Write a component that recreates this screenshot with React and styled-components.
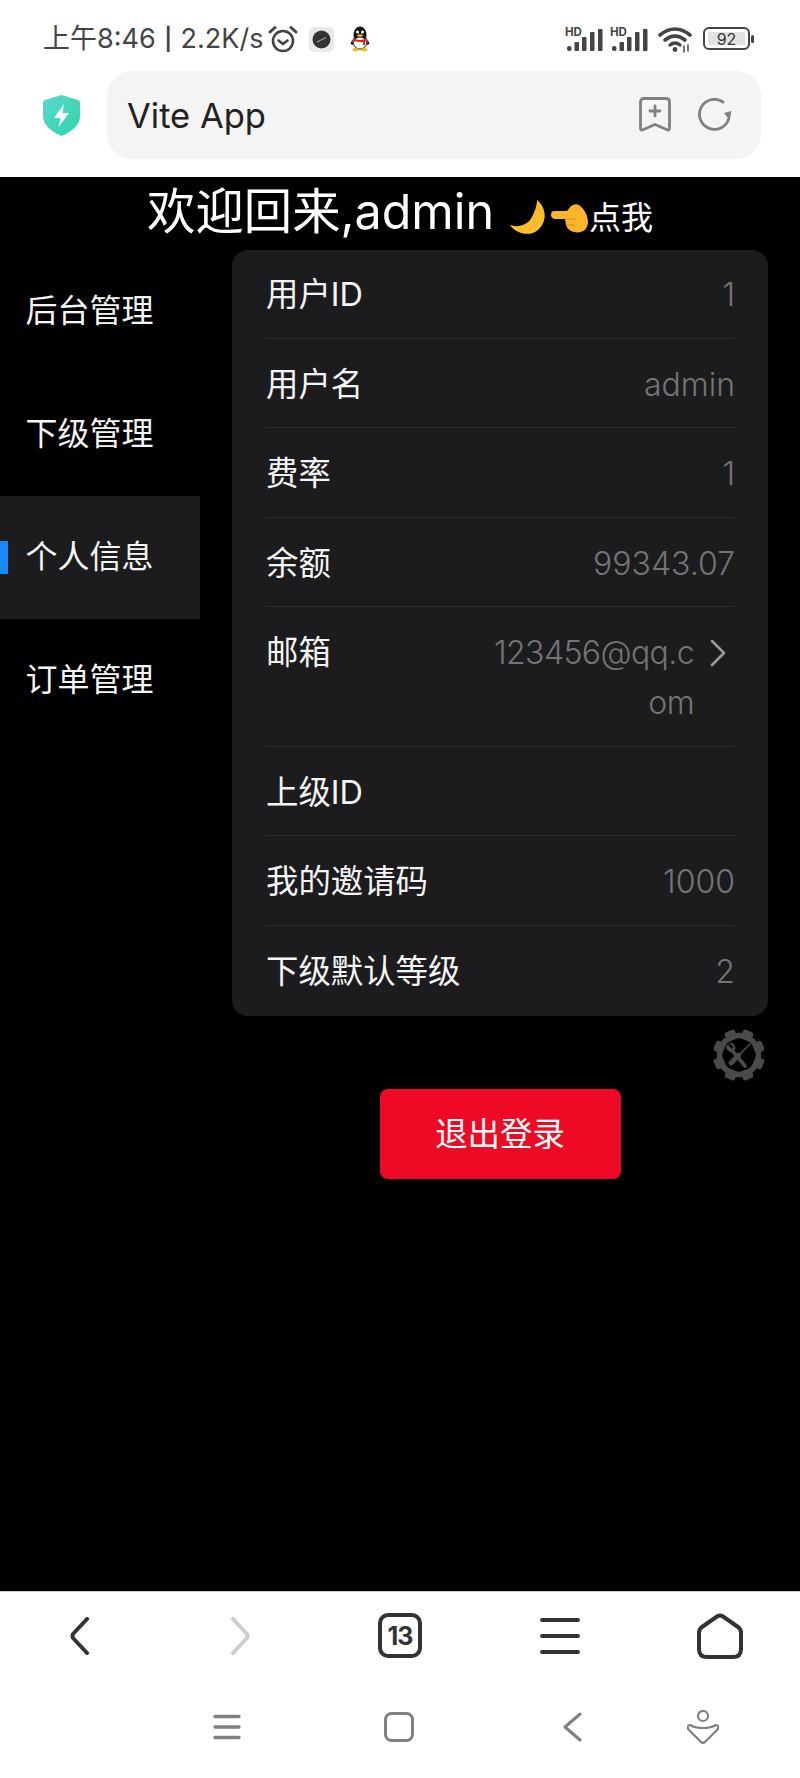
import React from 'react'
import styled, { createGlobalStyle } from 'styled-components'

const GlobalStyle = createGlobalStyle`
  html, body { margin: 0; padding: 0; background: #000; }
  body { font-family: Inter, "Noto Sans CJK SC", sans-serif; }
`

const Page = styled.div`
  width: 800px;
  height: 1778px;
  display: flex;
  flex-direction: column;
  overflow: hidden;
  background: #000;
`

const StatusBar = styled.div`
  height: 71px;
  box-sizing: border-box;
  padding: 21px 45px 0 43px;
  background: #fff;
  display: flex;
  align-items: flex-start;
  justify-content: space-between;
`

const StatusGroup = styled.div`
  display: flex;
  align-items: center;
  height: 36px;
`

const StatusText = styled.span`
  font-size: 27px;
  line-height: 36px;
  color: #444;
  white-space: nowrap;
`

const StatusDivider = styled.span`
  font-size: 22px;
  font-weight: 600;
  margin: 0 8.5px;
  position: relative;
  top: -1px;
`

const BrowserBar = styled.div`
  height: 106px;
  box-sizing: border-box;
  background: #fff;
  display: flex;
  align-items: flex-start;
  padding: 0 39px 0 43px;
`

const Shield = styled.svg`
  width: 37px;
  height: 41px;
  margin: 24px 27px 0 0;
  flex: none;
`

const AddressBox = styled.div`
  flex: 1;
  height: 88px;
  border-radius: 25px;
  background: #f4f4f4;
  display: flex;
  align-items: center;
  padding: 0 29px 0 20px;
`

const AddressText = styled.span`
  flex: 1;
  font-size: 34.5px;
  color: #222;
`

const Main = styled.div`
  flex: 1;
  display: flex;
  flex-direction: column;
  background: #000;
`

const Title = styled.div`
  height: 73px;
  box-sizing: border-box;
  padding-bottom: 12px;
  display: flex;
  align-items: center;
  justify-content: center;
  color: #fff;
  font-size: 48.4px;
  white-space: nowrap;
`

const TitleSmall = styled.span`
  font-size: 32px;
  margin-top: 14px;
`

const Body = styled.div`
  display: flex;
  gap: 32px;
  padding-right: 32px;
`

const Sidebar = styled.div`
  width: 200px;
  flex: none;
`

const SideItem = styled.div`
  position: relative;
  height: 123px;
  box-sizing: border-box;
  display: flex;
  align-items: center;
  padding: 0 0 7px 25.5px;
  font-size: 32px;
  color: #f5f5f5;
  background: ${p => (p.$active ? '#1c1c1e' : 'transparent')};

  ${p => p.$active && `
    &::before {
      content: '';
      position: absolute;
      left: 0;
      top: 45px;
      width: 8px;
      height: 33px;
      background: #1989fa;
    }
  `}
`

const Content = styled.div`
  flex: 1;
  min-width: 0;
  display: flex;
  flex-direction: column;
`

const Card = styled.div`
  background: #1c1c1e;
  border-radius: 16px;
  overflow: hidden;
  padding: 0 33px 0 34px;
`

const Row = styled.div`
  position: relative;
  display: flex;
  padding: 20px 0;
  line-height: 49.6px;
  font-size: 32.4px;

  ${p => !p.$last && `
    &::after {
      content: '';
      position: absolute;
      left: 0;
      right: 0;
      bottom: 1px;
      height: 1px;
      background: #2d2d2f;
    }
  `}
`

const RowLabel = styled.div`
  flex: 1;
  color: #f5f5f5;
  white-space: nowrap;
`

const RowValue = styled.div`
  flex: 1;
  color: #747476;
  font-size: 32px;
  text-align: right;
  word-break: break-all;
  font-weight: 300;
  letter-spacing: ${p => (p.$tight ? '-0.6px' : '0')};
`

const ArrowBox = styled.svg`
  width: 41px;
  height: 50px;
  flex: none;
`

const GearIcon = styled.svg`
  align-self: flex-end;
  width: 52px;
  height: 52px;
  margin: 13px 3px 0 0;
`

const LogoutButton = styled.button`
  align-self: center;
  width: 241px;
  height: 90px;
  margin-top: 8px;
  padding: 0 0 6px;
  border: none;
  border-radius: 8px;
  background: #ee0a24;
  color: #fff;
  font-family: inherit;
  font-size: 32.4px;
`

const BottomBar = styled.div`
  height: 187px;
  flex: none;
  box-sizing: border-box;
  background: #fff;
  border-top: 1px solid #ccc;
  display: flex;
  flex-direction: column;
`

const BrowserNav = styled.div`
  display: flex;
  height: 97px;
  padding-top: 21px;
  box-sizing: border-box;
`

const NavSlot = styled.div`
  flex: 1;
  display: flex;
  justify-content: center;
  align-items: flex-start;
`

const Chevron = styled.svg`
  margin-top: 4px;
`

const SystemNav = styled.div`
  display: flex;
  align-items: center;
  height: 60px;
  margin-top: 8px;
  padding-left: 213px;
`

const SystemIcon = styled.svg`
  flex: none;
  margin-left: ${p => p.$gap || 0}px;
`

const TabCount = styled.div`
  width: 44px;
  height: 45px;
  box-sizing: border-box;
  border: 4px solid #333;
  border-radius: 10px;
  display: flex;
  align-items: center;
  justify-content: center;
  color: #333;
  font-size: 25px;
  font-weight: 700;
  letter-spacing: -1px;
`

const Signal = ({ left }) => (
  <svg width="38" height="26" viewBox="0 0 38 26" style={{ marginLeft: left }}>
    <text x="0" y="9.5" fontSize="11.5" fontWeight="700" fill="#444" fontFamily="Inter, sans-serif">HD</text>
    <g fill="#444">
      <rect x="2" y="20" width="4.500" height="5" rx="2" />
      <rect x="9.500" y="16" width="4.500" height="9" rx="1" />
      <rect x="17" y="11" width="4.500" height="14" rx="1" />
      <rect x="25" y="6" width="4.500" height="19" rx="1" />
      <rect x="33" y="3" width="4.500" height="22" rx="1" />
    </g>
  </svg>
)

const PenguinIcon = () => (
  <svg width="20" height="26" viewBox="0 0 20 26" style={{ marginLeft: 16 }}>
    <ellipse cx="10" cy="9" rx="6.500" ry="8.500" fill="#111" />
    <ellipse cx="10" cy="17" rx="6.500" ry="6" fill="#fff" stroke="#222" strokeWidth="1" />
    <path d="M3 12 Q10 16 17 12 L17 15 L15 15 L15 19 L13 19 L13 16 Q10 16.500 3 15 Z" fill="#d8242a" />
    <ellipse cx="10" cy="9.500" rx="3" ry="1.300" fill="#f5b21a" />
    <circle cx="7.500" cy="6" r="1.500" fill="#fff" />
    <circle cx="12.500" cy="6" r="1.500" fill="#fff" />
    <path d="M2.500 13 L0.500 18 L3 19 Z M17.500 13 L19.500 18 L17 19 Z" fill="#111" />
    <ellipse cx="6" cy="23.500" rx="3.500" ry="1.500" fill="#f5b21a" />
    <ellipse cx="14" cy="23.500" rx="3.500" ry="1.500" fill="#f5b21a" />
  </svg>
)

const RowData = [
  { label: '用户ID', value: '1' },
  { label: '用户名', value: 'admin' },
  { label: '费率', value: '1' },
  { label: '余额', value: '99343.07' },
  { label: '邮箱', value: '123456@qq.com', arrow: true },
  { label: '上级ID', value: '' },
  { label: '我的邀请码', value: '1000' },
  { label: '下级默认等级', value: '2' },
]

const SideData = ['后台管理', '下级管理', '个人信息', '订单管理']

export default function App() {
  return (
    <Page>
      <GlobalStyle />
      <StatusBar>
        <StatusGroup>
          <StatusText>上午8:46<StatusDivider>|</StatusDivider>2.2K/s</StatusText>
          <svg width="30" height="28" viewBox="0 0 30 28" style={{ marginLeft: 5 }} fill="none" stroke="#444" strokeWidth="2.600" strokeLinecap="round" strokeLinejoin="round">
            <circle cx="15" cy="16" r="10" />
            <path d="M10.500 15.500 L15 19 L19.500 15.500" />
            <path d="M2 7 L7 2.500 M28 7 L23 2.500" strokeWidth="3" />
          </svg>
          <svg width="25" height="25" viewBox="0 0 25 25" style={{ marginLeft: 11 }}>
            <rect width="25" height="25" rx="5" fill="#e9e9e9" />
            <circle cx="12.500" cy="12.500" r="9" fill="#333" />
            <path d="M8 15 L17 10.500" stroke="#bbb" strokeWidth="1" />
          </svg>
          <PenguinIcon />
        </StatusGroup>
        <StatusGroup>
          <Signal left={0} />
          <Signal left={7} />
          <svg width="34" height="27" viewBox="0 0 34 27" style={{ marginLeft: 10 }} fill="none" stroke="#444" strokeLinecap="round">
            <path d="M2 9 Q17 -3 32 9" strokeWidth="3.600" />
            <path d="M7 14 Q17 6 27 14" strokeWidth="3.600" />
            <path d="M12 19 Q17 15 22 19" strokeWidth="3.400" />
            <circle cx="17" cy="23.500" r="2.400" fill="#444" stroke="none" />
            <path d="M26 20 V26 M30 19 V25" strokeWidth="1.500" />
          </svg>
          <svg width="52" height="24" viewBox="0 0 52 24" style={{ marginLeft: 11 }}>
            <rect x="1" y="1" width="45" height="21" rx="5" fill="#fff" stroke="#444" strokeWidth="2" />
            <rect x="5" y="5" width="37" height="13" fill="#e2e2e2" />
            <rect x="48" y="8" width="3" height="8" rx="1.500" fill="#444" />
            <text x="23.500" y="17.500" fontSize="16" textAnchor="middle" fill="#333" fontFamily="Inter, sans-serif">92</text>
          </svg>
        </StatusGroup>
      </StatusBar>

      <BrowserBar>
        <Shield viewBox="0 0 37 41">
          <defs>
            <linearGradient id="shieldFill" x1="0" y1="0" x2="1" y2="1">
              <stop offset="0" stopColor="#5cd8d0" />
              <stop offset="1" stopColor="#2fd4a8" />
            </linearGradient>
          </defs>
          <path d="M18.500 0 L35 5 Q37 5.500 37 8 V21 Q37 33 18.500 41 Q0 33 0 21 V8 Q0 5.500 2 5 Z" fill="url(#shieldFill)" />
          <path d="M21 9 L11 23 H17.500 L15.500 32 L26 18 H19.500 Z" fill="#fff" />
        </Shield>
        <AddressBox>
          <AddressText>Vite App</AddressText>
          <svg width="32" height="35" viewBox="0 0 32 35" fill="none" stroke="#808080" strokeWidth="2.800" strokeLinecap="round" strokeLinejoin="round" style={{ marginTop: -2 }}>
            <path d="M5 1.500 H27 Q30.500 1.500 30.500 5 V31 Q30.500 34 27.500 32.500 L16 27.500 L4.500 32.500 Q1.500 34 1.500 31 V5 Q1.500 1.500 5 1.500 Z" />
            <path d="M16 9 V19 M11 14 H21" />
          </svg>
          <svg width="34" height="34" viewBox="0 0 34 34" style={{ marginLeft: 27 }} fill="none" stroke="#808080" strokeWidth="2.800" strokeLinecap="round">
            <path d="M31 20 A15 15 0 1 1 25 4" />
            <path d="M26 15 L33.500 13 L31.500 22 Z" fill="#808080" stroke="none" />
          </svg>
        </AddressBox>
      </BrowserBar>

      <Main>
        <Title>
          欢迎回来,admin
          <svg width="36" height="36" viewBox="0 0 36 36" style={{ marginLeft: 16, marginTop: 19 }}>
            <path d="M27 1 C36 8 38 22 28 31 C20 38 6 35 0 26 C8 29 18 26 22 18 C25 12 27 6 27 1 Z" fill="#fbbd2a" />
          </svg>
          <svg width="38" height="30" viewBox="0 0 38 30" style={{ marginLeft: 5, marginTop: 20 }}>
            <path d="M3 8 H16 L20 3 Q24 0 28 2 Q36 8 37 18 Q37 29 26 29.500 Q17 29 15 22 L14 16 H4 Q0 15.500 0 12 Q0 8 3 8 Z" fill="#fbb52a" />
            <path d="M14 16 H24 M16 22 H23" stroke="#d98f10" strokeWidth="1.200" fill="none" strokeLinecap="round" />
          </svg>
          <TitleSmall>点我</TitleSmall>
        </Title>
        <Body>
          <Sidebar>
            {SideData.map((item, i) => (
              <SideItem key={item} $active={i === 2}>{item}</SideItem>
            ))}
          </Sidebar>
          <Content>
            <Card>
              {RowData.map((row, i) => (
                <Row key={row.label} $last={i === RowData.length - 1}>
                  <RowLabel>{row.label}</RowLabel>
                  <RowValue $tight={row.arrow}>{row.value}</RowValue>
                  {row.arrow && (
                    <ArrowBox viewBox="0 0 41 50" fill="none" stroke="#9a9a9a" strokeWidth="2.600" strokeLinecap="round" strokeLinejoin="round">
                      <path d="M18 13 L30 25 L18 37" />
                    </ArrowBox>
                  )}
                </Row>
              ))}
            </Card>
            <GearIcon viewBox="0 0 52 52">
              {[0, 45, 90, 135, 180, 225, 270, 315].map(a => (
                <rect key={a} x="20.500" y="0" width="11" height="10" rx="2.500" fill="#4a4a4a" transform={`rotate(${a + 22.5} 26 26)`} />
              ))}
              <circle cx="26" cy="26" r="19.500" fill="none" stroke="#4a4a4a" strokeWidth="5.500" />
              <path d="M18 20 L32 37" stroke="#4a4a4a" strokeWidth="3.600" strokeLinecap="round" />
              <path d="M17 13.500 L13 17 Q13 23 20 23 L22.500 19.500 Q22 14 17 13.500 Z" fill="#4a4a4a" />
              <path d="M16 15 L19.500 19" stroke="#000" strokeWidth="2.200" />
              <path d="M37 15 L27 25" stroke="#4a4a4a" strokeWidth="1.600" strokeLinecap="round" />
              <path d="M25.500 26.500 L18 34" stroke="#4a4a4a" strokeWidth="5" strokeLinecap="round" />
            </GearIcon>
            <LogoutButton>退出登录</LogoutButton>
          </Content>
        </Body>
      </Main>

      <BottomBar>
        <BrowserNav>
          <NavSlot>
            <Chevron width="20" height="38" viewBox="0 0 20 38" fill="none" stroke="#333" strokeWidth="4" strokeLinecap="round" strokeLinejoin="round">
              <path d="M17 2 L3 17 Q2 19 3 21 L17 36" />
            </Chevron>
          </NavSlot>
          <NavSlot>
            <Chevron width="20" height="38" viewBox="0 0 20 38" fill="none" stroke="#ccc" strokeWidth="4" strokeLinecap="round" strokeLinejoin="round">
              <path d="M3 2 L17 17 Q18 19 17 21 L3 36" />
            </Chevron>
          </NavSlot>
          <NavSlot>
            <TabCount>13</TabCount>
          </NavSlot>
          <NavSlot>
            <svg width="40" height="38" viewBox="0 0 40 38" fill="none" stroke="#333" strokeWidth="4" strokeLinecap="round" style={{ marginTop: 3 }}>
              <path d="M2 4 H38 M2 20 H38 M2 36 H38" />
            </svg>
          </NavSlot>
          <NavSlot>
            <svg width="46" height="46" viewBox="0 0 46 46" fill="none" stroke="#333" strokeWidth="4" strokeLinejoin="round">
              <path d="M20 3.500 Q23 1.500 26 3.500 L41 14 Q44 16 44 20 V36 Q44 44 36 44 H10 Q2 44 2 36 V20 Q2 16 5 14 Z" />
            </svg>
          </NavSlot>
        </BrowserNav>
        <SystemNav>
          <SystemIcon width="28" height="26" viewBox="0 0 28 26" fill="none" stroke="#808080" strokeWidth="3.400" strokeLinecap="round">
            <path d="M2 2.500 H26 M2 13 H26 M2 23.500 H26" />
          </SystemIcon>
          <SystemIcon $gap={143} width="30" height="30" viewBox="0 0 30 30" fill="none" stroke="#808080" strokeWidth="3">
            <rect x="1.500" y="1.500" width="27" height="27" rx="6" />
          </SystemIcon>
          <SystemIcon $gap={149} width="19" height="30" viewBox="0 0 19 30" fill="none" stroke="#808080" strokeWidth="3" strokeLinecap="round" strokeLinejoin="round">
            <path d="M17 2 L2 15 L17 28" />
          </SystemIcon>
          <SystemIcon $gap={105} width="32" height="34" viewBox="0 0 32 34" fill="none" stroke="#808080" strokeWidth="2.200" strokeLinejoin="round">
            <circle cx="16" cy="6" r="5" />
            <path d="M3 15 Q8 18 16 18 Q24 18 29 15 Q32 15 31 19 L18 32 Q16 33.500 14 32 L1 19 Q0 15 3 15 Z" />
          </SystemIcon>
        </SystemNav>
      </BottomBar>
    </Page>
  )
}
